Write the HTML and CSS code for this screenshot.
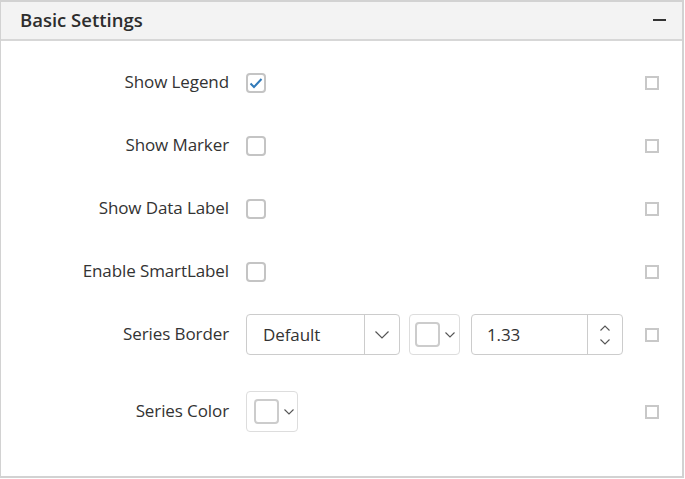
FILE: index.html
```html
<!DOCTYPE html>
<html>
<head>
<meta charset="utf-8">
<link rel="stylesheet" href="styles.css">
</head>
<body>
<div class="panel">
  <div class="panel-header">
    <span class="title">Basic Settings</span>
    <span class="collapse"></span>
  </div>
  <div class="panel-body">
    <div class="row">
      <div class="label">Show Legend</div>
      <div class="control">
        <span class="checkbox checked">
          <svg width="14" height="12" viewBox="0 0 14 12"><path d="M1.5 6.5 L5 10 L12.5 2" fill="none" stroke="#317ab9" stroke-width="2"/></svg>
        </span>
      </div>
      <span class="mini"></span>
    </div>
    <div class="row">
      <div class="label">Show Marker</div>
      <div class="control"><span class="checkbox"></span></div>
      <span class="mini"></span>
    </div>
    <div class="row">
      <div class="label">Show Data Label</div>
      <div class="control"><span class="checkbox"></span></div>
      <span class="mini"></span>
    </div>
    <div class="row">
      <div class="label">Enable SmartLabel</div>
      <div class="control"><span class="checkbox"></span></div>
      <span class="mini"></span>
    </div>
    <div class="row">
      <div class="label">Series Border</div>
      <div class="control">
        <div class="dropdown">
          <span class="dd-text">Default</span>
          <span class="dd-arrow">
            <svg width="14" height="8" viewBox="0 0 14 8"><path d="M0.5 0.5 L7 7 L13.5 0.5" fill="none" stroke="#555" stroke-width="1.2"/></svg>
          </span>
        </div>
        <div class="picker picker-a">
          <span class="swatch"></span>
          <svg class="pk-arrow" width="10" height="6" viewBox="0 0 10 6"><path d="M0.5 0.5 L5 5 L9.5 0.5" fill="none" stroke="#555" stroke-width="1.1"/></svg>
        </div>
        <div class="numeric">
          <span class="num-text">1.33</span>
          <span class="spin">
            <svg width="10" height="6" viewBox="0 0 10 6"><path d="M0.5 5.5 L5 1 L9.5 5.5" fill="none" stroke="#555" stroke-width="1.1"/></svg>
            <svg width="10" height="6" viewBox="0 0 10 6"><path d="M0.5 0.5 L5 5 L9.5 0.5" fill="none" stroke="#555" stroke-width="1.1"/></svg>
          </span>
        </div>
      </div>
      <span class="mini"></span>
    </div>
    <div class="row row-last">
      <div class="label">Series Color</div>
      <div class="control">
        <div class="picker picker-b">
          <span class="swatch"></span>
          <svg class="pk-arrow" width="10" height="6" viewBox="0 0 10 6"><path d="M0.5 0.5 L5 5 L9.5 0.5" fill="none" stroke="#555" stroke-width="1.1"/></svg>
        </div>
      </div>
      <span class="mini"></span>
    </div>
  </div>
</div>
</body>
</html>
```
FILE: styles.css
```css
html, body {
  margin: 0;
  padding: 0;
  background: #ffffff;
}
body {
  font-family: "Open Sans", "Noto Sans", sans-serif;
  color: #333333;
}
.panel {
  box-sizing: border-box;
  width: 684px;
  height: 478px;
  border-style: solid;
  border-color: #d2d2d2;
  border-width: 2px 2px 2px 1px;
  display: flex;
  flex-direction: column;
}
.panel-header {
  height: 37px;
  background: #f3f3f3;
  border-bottom: 2px solid #d7d7d7;
  display: flex;
  align-items: center;
  justify-content: space-between;
  padding: 0 16px 0 19px;
}
.title {
  font-size: 18.5px;
  font-weight: 600;
  color: #2d2d2d;
  margin-top: -3px;
}
.collapse {
  width: 13px;
  height: 2px;
  background: #333;
  margin-top: -1px;
}
.panel-body {
  padding-top: 10px;
  display: flex;
  flex-direction: column;
}
.row {
  height: 63px;
  display: flex;
  align-items: center;
}
.row-last {
  margin-top: 14px;
}
.label {
  width: 228px;
  text-align: right;
  font-size: 17px;
  letter-spacing: -0.1px;
  color: #333;
  padding-bottom: 2px;
}
.control {
  flex: 1;
  display: flex;
  align-items: center;
  padding-left: 17px;
}
.checkbox {
  box-sizing: border-box;
  width: 20px;
  height: 20px;
  border: 2px solid #c4c4c4;
  border-radius: 4px;
  display: flex;
  align-items: center;
  justify-content: center;
}
.mini {
  box-sizing: border-box;
  width: 14px;
  height: 14px;
  border: 2px solid #c8c8c8;
  margin-right: 23px;
}
.dropdown {
  box-sizing: border-box;
  width: 154px;
  height: 41px;
  border: 1px solid #cccccc;
  border-radius: 4px;
  display: flex;
  align-items: stretch;
}
.dd-text {
  flex: 1;
  display: flex;
  align-items: center;
  padding-left: 16px;
  font-size: 17px;
  letter-spacing: -0.1px;
  border-right: 1px solid #cccccc;
}
.dd-arrow {
  width: 34px;
  display: flex;
  align-items: center;
  justify-content: center;
}
.picker {
  box-sizing: border-box;
  height: 41px;
  border: 1px solid #dddddd;
  border-radius: 4px;
  display: flex;
  align-items: center;
}
.picker-a {
  width: 51px;
  margin-left: 9px;
  padding-left: 5px;
}
.picker-b {
  width: 52px;
  padding-left: 7px;
}
.swatch {
  box-sizing: border-box;
  width: 25px;
  height: 25px;
  border: 2px solid #cccccc;
  border-radius: 4px;
}
.pk-arrow {
  margin-left: 5px;
}
.numeric {
  box-sizing: border-box;
  width: 152px;
  height: 41px;
  margin-left: 11px;
  border: 1px solid #cccccc;
  border-radius: 4px;
  display: flex;
  align-items: stretch;
}
.num-text {
  flex: 1;
  display: flex;
  align-items: center;
  padding-left: 15px;
  font-size: 17px;
  letter-spacing: -0.1px;
  border-right: 1px solid #cccccc;
}
.spin {
  width: 34px;
  display: flex;
  flex-direction: column;
  align-items: center;
  justify-content: center;
  gap: 8px;
}
```
